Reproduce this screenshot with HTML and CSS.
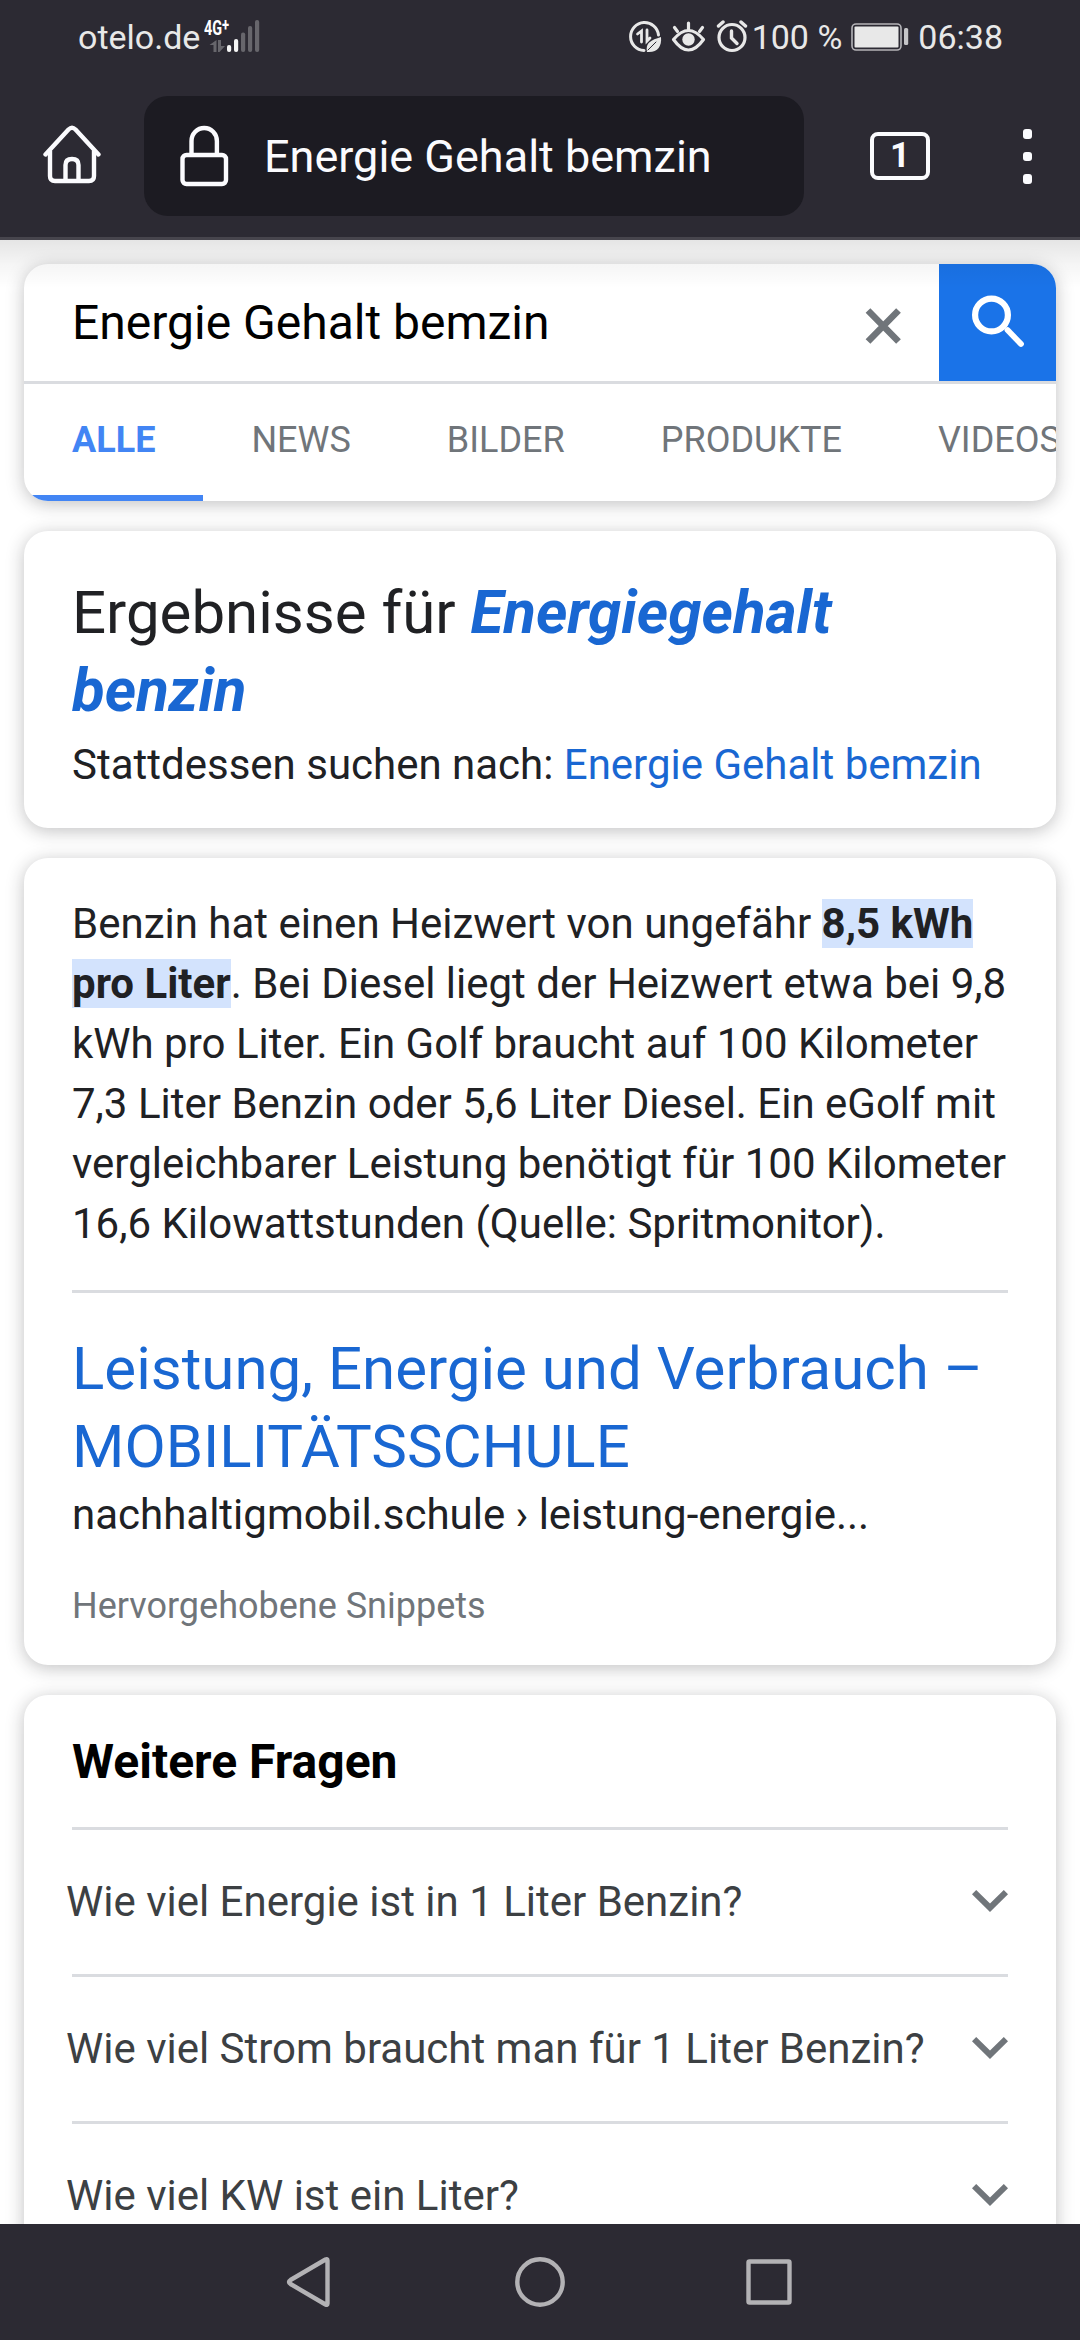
FILE: index.html
```html
<!DOCTYPE html>
<html lang="de">
  <head>
    <meta charset="utf-8" />
    <meta name="viewport" content="width=device-width, initial-scale=1" />
    <title>Energie Gehalt bemzin</title>
    <link rel="stylesheet" href="styles.css">
  </head>
  <body>
    <header class="chrome">
      <div class="status">
        <span class="carrier">otelo.de</span>
        <div class="signal">
          <span class="network">4G<sup>+</sup></span>
          <svg class="bars" width="58" height="34" viewBox="0 0 58 34">
            <g fill="#67666c">
              <path d="M12.500 20v12h-3v-7h-4zM14 20h3v6h4l-5.500 6H14z" />
              <rect x="37" y="12.500" width="4.200" height="19.500" rx="2" />
              <rect x="44" y="6" width="4.200" height="26" rx="2" />
              <rect x="51" y="0" width="4.200" height="32" rx="2" />
            </g>
            <g fill="#f5f5f5">
              <rect x="23" y="25" width="4.200" height="7" rx="2" />
              <rect x="30" y="19" width="4.200" height="13" rx="2" />
            </g>
          </svg>
        </div>
        <div class="status-right">
          <svg class="status-icon" width="124" height="34" viewBox="0 0 124 34" fill="none" stroke="#e8e8e8" stroke-linecap="round">
            <path d="M17 30.500A14 14 0 1 1 31.500 15" stroke-width="3" />
            <path d="M10.500 14l4-3v11M20 10v11l3-3" stroke-width="2.800" />
            <path d="M20 32c-2-9 4-12 14-15 1 10-4 16-14 15z" fill="#e8e8e8" stroke="none" />
            <path d="M21 30l8-8" stroke="#2c2a33" stroke-width="1" />
            <path d="M46.500 19.500q15-18 30 0q-15 21-30 0z" stroke-width="3.200" stroke-linejoin="round" />
            <circle cx="61.500" cy="19.500" r="6.200" fill="#e8e8e8" stroke="none" />
            <path d="M61.500 3v6M47.500 7.500l3 4M75.500 7.500l-3 4" stroke-width="3.200" />
            <circle cx="105" cy="17.500" r="13" stroke-width="3.200" />
            <path d="M104.500 11v7l5.500 5.500" stroke-width="3.400" />
            <path d="M91.500 6l4.500-4M118.500 6l-4.500-4" stroke-width="3.400" />
          </svg>
          <span class="percent">100 %</span>
          <svg class="battery" width="58" height="30" viewBox="0 0 58 30">
            <rect x="1" y="1" width="49" height="26" rx="4" fill="none" stroke="#b5b4b8" stroke-width="1.600" />
            <rect x="3.500" y="3.500" width="44" height="21" rx="1" fill="#e8e8e8" />
            <rect x="53" y="5" width="4.200" height="17" rx="1.500" fill="#c5c5c8" />
          </svg>
          <span class="clock">06:38</span>
        </div>
      </div>
      <div class="toolbar">
        <svg class="home" width="58" height="60" viewBox="0 0 58 60" fill="none" stroke="#fbfbfe" stroke-width="4.400" stroke-linecap="round" stroke-linejoin="round">
          <path d="M2.500 29.500L25.500 4.500Q29 1 32.500 4.500L55.500 29.500" />
          <path d="M7 26v25q0 5 5 5h34q5 0 5-5V26" />
          <path d="M22.500 55V40q0-6 6.500-6t6.500 6v15" />
        </svg>
        <div class="address">
          <svg class="lock" width="50" height="62" viewBox="0 0 50 62" fill="none" stroke="#fbfbfe" stroke-width="4.400">
            <rect x="2.500" y="30" width="43.500" height="29" rx="4" />
            <path d="M11.500 29.500V16a12.700 13 0 0 1 25.400 0v13.500" />
          </svg>
          <span>Energie Gehalt bemzin</span>
        </div>
        <div class="tab-count">1</div>
        <div class="menu"><i></i><i></i><i></i></div>
      </div>
    </header>

    <main class="page">
      <section class="card search">
        <div class="search-row">
          <span class="query">Energie Gehalt bemzin</span>
          <svg class="clear" width="36" height="36" viewBox="0 0 36 36" stroke="#70757a" stroke-width="6.600">
            <path d="M3 2.500L33.500 33.500M33.500 2.500L3 33.500" />
          </svg>
          <div class="search-button">
            <svg width="56" height="56" viewBox="0 0 56 56" fill="none" stroke="#fff" stroke-linecap="round">
              <circle cx="21.500" cy="21" r="16.400" stroke-width="6.200" />
              <path d="M37.500 36L51 50" stroke-width="5.800" />
            </svg>
          </div>
        </div>
        <nav class="tabs">
          <span class="tab tab--active">ALLE</span>
          <span class="tab">NEWS</span>
          <span class="tab">BILDER</span>
          <span class="tab">PRODUKTE</span>
          <span class="tab">VIDEOS</span>
        </nav>
      </section>

      <section class="card correction">
        <p class="headline">Ergebnisse für <a class="fixed">Energiegehalt benzin</a></p>
        <p class="text">Stattdessen suchen nach: <a>Energie Gehalt bemzin</a></p>
      </section>

      <section class="card snippet">
        <p class="text">Benzin hat einen Heizwert von ungefähr <b>8,5 kWh<br>pro Liter</b>. Bei Diesel liegt der Heizwert etwa bei 9,8<br>kWh pro Liter. Ein Golf braucht auf 100 Kilometer<br>7,3 Liter Benzin oder 5,6 Liter Diesel. Ein eGolf mit<br>vergleichbarer Leistung benötigt für 100 Kilometer<br>16,6 Kilowattstunden (Quelle: Spritmonitor).</p>
        <hr>
        <h3 class="headline"><a>Leistung, Energie und Verbrauch –<br>MOBILITÄTSSCHULE</a></h3>
        <p class="text source">nachhaltigmobil.schule › leistung-energie...</p>
        <p class="about">Hervorgehobene Snippets</p>
      </section>

      <section class="card questions">
        <h2>Weitere Fragen</h2>
        <div class="question">
          <span>Wie viel Energie ist in 1 Liter Benzin?</span>
          <svg width="36" height="22" viewBox="0 0 36 22"><path d="M4.200 0L18 13.600 31.800 0 36 4.200 18 22 0 4.200z" /></svg>
        </div>
        <div class="question">
          <span>Wie viel Strom braucht man für 1 Liter Benzin?</span>
          <svg width="36" height="22" viewBox="0 0 36 22"><path d="M4.200 0L18 13.600 31.800 0 36 4.200 18 22 0 4.200z" /></svg>
        </div>
        <div class="question">
          <span>Wie viel KW ist ein Liter?</span>
          <svg width="36" height="22" viewBox="0 0 36 22"><path d="M4.200 0L18 13.600 31.800 0 36 4.200 18 22 0 4.200z" /></svg>
        </div>
      </section>
    </main>

    <footer class="navbar">
      <svg width="520" height="60" viewBox="0 0 520 60" fill="none" stroke="#b3b2b5" stroke-width="4.400" stroke-linejoin="round">
        <path d="M47.500 8.500q0-2-2-1L10.500 28q-3 2 0 4l35 20.500q2 1 2-1z" />
        <circle cx="260" cy="30" r="22.700" />
        <rect x="468.500" y="9.500" width="41" height="41" rx="1" />
      </svg>
    </footer>
  </body>
</html>
```
FILE: styles.css
```css
:root {
  --chrome: #2c2a33;
  --link: #1967d2;
  --text: #202124;
  --grey: #70757a;
  --line: #dadce0;
}

* {
  box-sizing: border-box;
}

body {
  margin: 0;
  height: 2340px;
  display: flex;
  flex-direction: column;
  overflow: hidden;
  background: #fff;
  color: var(--text);
  font-family: Roboto, sans-serif;
}

p,
h2,
h3 {
  margin: 0;
  font-weight: 400;
}

svg {
  display: block;
  flex: none;
}

a {
  color: var(--link);
}

/* browser chrome */
.chrome {
  flex: none;
  height: 240px;
  background: var(--chrome);
  border-bottom: 3px solid #47454d;
  color: #fbfbfe;
}
.status {
  height: 72px;
  padding: 0 77px 0 78px;
  display: flex;
  color: #e8e8e8;
  font-size: 34px;
  line-height: 74px;
  white-space: nowrap;
}
.signal {
  position: relative;
  width: 60px;
  margin-left: 4px;
}
.network {
  position: absolute;
  left: 0;
  top: 18px;
  font-size: 20px;
  font-weight: 700;
  line-height: 20px;
  color: #fff;
  transform: scaleX(0.72);
  transform-origin: left;
}
.network sup {
  font-size: 18px;
  line-height: 0;
  vertical-align: 4px;
}
.bars {
  margin-top: 20px;
}
.status-right {
  margin-left: auto;
  display: flex;
}
.status-icon {
  margin-top: 20px;
}
.percent {
  margin-left: 1px;
}
.battery {
  margin: 23px 9px 0;
}
.toolbar {
  height: 168px;
  padding: 24px 48px 0 43px;
  display: flex;
}
.home {
  margin-top: 29px;
}
.address {
  width: 660px;
  height: 120px;
  margin-left: 43px;
  padding-left: 36px;
  display: flex;
  border-radius: 24px;
  background: #1c1b22;
  font-size: 45px;
  line-height: 122px;
}
.lock {
  margin: 29px 34px 0 0;
}
.tab-count {
  width: 60px;
  height: 48px;
  margin: 36px 0 0 66px;
  border: 4.500px solid #fbfbfe;
  border-radius: 8px;
  font-size: 35px;
  font-weight: 700;
  line-height: 39px;
  text-align: center;
}
.menu {
  margin: 33px 0 0 auto;
  display: flex;
  flex-direction: column;
  gap: 13px;
}
.menu i {
  width: 9.500px;
  height: 9.500px;
  border-radius: 3px;
  background: #fbfbfe;
}

/* results */
.page {
  flex: 1;
  min-height: 0;
  padding: 24px 24px 0;
  display: flex;
  flex-direction: column;
  gap: 30px;
  overflow: hidden;
  position: relative;
}
.page::before {
  content: "";
  position: absolute;
  z-index: 1;
  inset: 0 0 auto;
  height: 48px;
  background: linear-gradient(rgba(0, 0, 0, 0.1), rgba(0, 0, 0, 0.04) 50%, transparent);
}
.card {
  flex: none;
  border-radius: 24px;
  background: #fff;
  box-shadow: 0 3px 18px rgba(32, 33, 36, 0.28);
}
.search {
  height: 237px;
  overflow: hidden;
}
.search-row {
  height: 120px;
  border-bottom: 3px solid var(--line);
  padding-left: 48px;
  display: flex;
  color: #000;
  font-size: 48px;
  line-height: 117px;
}
.clear {
  margin: 44px 38px 0 auto;
}
.search-button {
  width: 117px;
  height: 117px;
  padding: 30px 0 0 31px;
  background: #1a73e8;
}
.tabs {
  height: 117px;
  display: flex;
  color: var(--grey);
  font-size: 36px;
  line-height: 113px;
}
.tab {
  padding: 0 48px;
}
.tab--active {
  border-bottom: 6px solid #4285f4;
  color: #4285f4;
  font-weight: 700;
}
.headline {
  font-size: 60px;
  line-height: 78px;
}
.text {
  font-size: 42px;
  line-height: 60px;
}
.correction {
  height: 297px;
  padding: 43px 48px 0;
}
.correction .text {
  margin-top: 5px;
}
.fixed {
  font-style: italic;
  font-weight: 700;
}
.snippet {
  height: 807px;
  padding: 36px 48px 0;
  white-space: nowrap;
}
.snippet b {
  background: #d3e3fd;
}
.snippet hr {
  height: 3px;
  margin: 36px 0 37px;
  border: 0;
  background: var(--line);
}
.source {
  margin-top: -1px;
}
.about {
  margin-top: 37px;
  color: var(--grey);
  font-size: 36px;
  line-height: 48px;
}
.questions {
  height: 700px;
  padding: 0 48px;
}
.questions h2 {
  height: 132px;
  color: #000;
  font-size: 48px;
  font-weight: 700;
  line-height: 134px;
}
.question {
  height: 147px;
  padding-bottom: 2px;
  border-top: 3px solid var(--line);
  display: flex;
  align-items: center;
  justify-content: space-between;
  color: #3c4043;
  font-size: 42px;
  white-space: nowrap;
}
.question span {
  margin-left: -6px;
}
.question svg {
  fill: var(--grey);
}

/* system buttons */
.navbar {
  flex: none;
  height: 116px;
  padding: 28px 280px 0;
  background: var(--chrome);
}
```
